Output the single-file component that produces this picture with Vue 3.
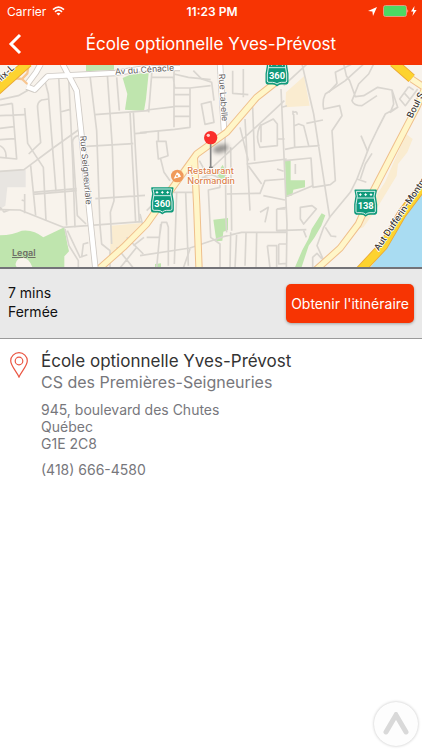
<template>
  <div class="page">
    <header class="top">
      <div class="status-bar">
        <div class="status-side">
          <span>Carrier</span>
          <svg class="wifi" viewBox="0 0 13 10" aria-hidden="true">
            <path d="M1 3.6 Q6.5 -1.2 12 3.6" />
            <path d="M3 5.8 Q6.5 2.6 10 5.8" />
            <path class="wifi-dot" d="M4.5 7.5 Q6.5 5.9 8.5 7.5 L6.5 9.6 Z" />
          </svg>
        </div>
        <span class="clock">11:23 PM</span>
        <div class="status-side right">
          <svg class="arrow" viewBox="0 0 9 9" aria-hidden="true">
            <path d="M9 0 L5 9 L4.4 4.6 L0 4 Z" />
          </svg>
          <svg class="battery" viewBox="0 0 34 12" aria-hidden="true">
            <rect x="0.5" y="0.5" width="23" height="11" rx="2" fill="#4cd964" stroke="#e59a80" />
            <path d="M24.5 4 Q26 6 24.5 8 Z" fill="#ffd9cf" />
            <path d="M31.5 1 L28 6.6 H30.4 L29.4 11 L33.6 5 H31 Z" fill="#fff" />
          </svg>
        </div>
      </div>
      <div class="nav-bar">
        <button class="back" type="button" aria-label="Retour">
          <svg viewBox="0 0 14 22" aria-hidden="true">
            <path d="M12 2 L3 11 L12 20" />
          </svg>
        </button>
        <h1>{{ school.name }}</h1>
      </div>
    </header>

    <div class="map">
      <svg class="map-tiles" viewBox="0 3 1266 606" preserveAspectRatio="xMidYMid slice">
        <defs>
          <filter id="soft" x="-50%" y="-50%" width="200%" height="200%">
            <feGaussianBlur stdDeviation="7" />
          </filter>
          <g id="shield">
            <path d="M-31 -37 H31 L28 -20 L32 5 V28 Q32 34 24 34 H14 Q6 34 0 39 Q-6 34 -14 34 H-24 Q-32 34 -32 28 V5 L-28 -20 Z" fill="#109a7b" stroke="#109a7b" stroke-width="5" stroke-linejoin="round" />
            <path d="M-28 -34 H28 L25 -19 L29 5 V26 Q29 30 24 30 H13 Q6 30 0 35 Q-6 30 -13 30 H-24 Q-29 30 -29 26 V5 L-25 -19 Z M-25 -14 H25" fill="none" stroke="#fff" stroke-width="2.5" />
            <path d="M-16 -29 l2 3 3 2 -3 2 -2 3 -2 -3 -3 -2 3 -2z M0 -29 l2 3 3 2 -3 2 -2 3 -2 -3 -3 -2 3 -2z M16 -29 l2 3 3 2 -3 2 -2 3 -2 -3 -3 -2 3 -2z" fill="#fff" />
          </g>
        </defs>
        <rect x="0" y="0" width="1266" height="612" fill="#f8f3ec" />

        <!-- parks, built-up blocks and water -->
        <path class="block" d="M0 320 L77 317 V370 H22 L16 425 L0 435 Z" />
        <g class="park">
          <path d="M258 0 H342 V17 L258 22 Z" />
          <path d="M368 42 L390 32 L425 28 L446 28 L438 105 L432 141 L375 137 L382 90 Z" />
          <path d="M0 514 Q40 512 65 500 Q100 495 130 520 L193 490 L202 540 L207 562 L193 577 V612 H98 Q85 572 55 585 Q40 598 52 612 H0 Z" />
          <path d="M465 612 V600 L483 598 V612 Z" />
          <path d="M640 467 L684 462 V498 L670 503 L667 530 L649 532 Z" />
          <path d="M650 330 L668 302 L676 320 L676 342 L660 345 Z" />
          <path d="M855 289 H872 V349 H915 V370 L880 377 L877 394 L858 400 Z" />
          <path d="M965 448 L976 454 L964 485 L944 520 L926 545 L904 612 H884 L907 558 L925 525 L935 495 Z" />
        </g>
        <g class="sand">
          <path d="M333 485 L432 476 L435 490 L350 565 L330 570 Z" />
          <path d="M858 85 L912 37 L929 125 L856 130 Z" />
          <path d="M1218 210 L1238 225 L1222 265 L1194 300 L1190 335 L1126 440 L1090 490 L1060 500 L1155 355 Z" />
        </g>
        <path d="M1266 385 L1225 440 L1165 540 L1110 612 H1266 Z" fill="#a9dcf2" />

        <!-- side streets -->
        <g class="street">
          <path d="M0 107 L55 95 L85 78 M37 118 L50 285 L0 280 M0 124 L37 118 M0 155 L75 152 M0 193 L42 188 M0 227 L45 224 M0 245 Q20 255 18 280" />
          <path d="M74 132 L83 238 L130 310 L138 470 M146 105 L125 108 Q110 115 113 135 L122 236 L86 270" />
          <path d="M135 52 L145 90 L168 382 M176 38 L190 290 L200 485 M206 42 L218 290 L225 490 M181 144 L208 137" />
          <path d="M0 322 L72 317 L155 255 L235 198 M92 305 L107 455 M98 385 L230 374 M98 391 L230 380 M74 390 V448 M65 408 L76 412" />
          <path d="M0 437 L60 438 L190 490 L425 473 M0 430 L12 444 L30 437" />
          <path d="M270 35 L290 200 L300 485 L305 540 L330 560 V612 M322 32 L337 250 L342 410 L331 445 L335 540" />
          <path d="M284 152 L445 140 M258 247 L400 239 M286 404 L435 394 M400 143 L418 475 M390 143 L407 475 M404 209 L440 206 M350 40 L358 140" />
          <path d="M235 215 Q215 220 218 240 L232 455 L258 480 M202 500 L240 580 L262 572 M245 580 L250 540 L265 536 M195 495 L207 545 L235 590 V612 M350 550 L400 612 M380 520 L430 570 M410 550 L360 612 M432 520 L400 545" />
        </g>
        <g class="street" transform="translate(420 0)">
          <path d="M36 20 L26 145 M102 20 V190 M102 30 L145 40 L212 47 M36 40 H100 L104 72 H150 L212 65 M150 72 V190 L104 196 M104 92 H148 M104 127 H148 M104 157 H148 M20 138 L104 128 M0 206 L104 196" />
          <path d="M184 120 L213 113 L222 175 L195 181 Z M160 20 L185 45 L215 55 L222 110 M278 20 V88 L325 92 M310 15 V100" />
          <path d="M50 232 H78 L84 275 L55 285 Z M55 200 V235 M62 285 L72 325 L90 350 M0 450 L10 490 M20 440 L50 410 M100 385 H160 M110 385 L103 600 M137 385 L145 605 M20 520 L58 520 L65 475 H80 L85 490 V605 M62 480 L50 612" />
          <path d="M215 312 L433 110 M255 205 L258 470 L260 505 M272 250 L275 500 M315 165 L330 440 M338 130 L344 290 M300 190 L325 290 M178 290 L200 330 M185 345 Q210 320 240 345 L240 370 L205 378 L212 520 L240 540 L240 612 M185 340 L240 350" />
          <path d="M360 185 L400 165 L412 180 V245 L360 250 Q345 220 360 185 M363 180 V235 M320 300 L440 285 M325 305 L365 360 M260 390 L360 388 L375 350 L435 345 M370 395 L435 408 M360 445 L385 430 L375 475 M410 435 L440 430 M410 435 V500 H440" />
          <path d="M0 575 L150 552 L250 518 L305 505 H440 M150 555 L130 612 M290 508 L285 612 M318 508 L315 605 M350 508 L348 612 M382 545 L390 612 M382 545 H410 V612 M272 505 L270 612" />
        </g>
        <g class="street" transform="translate(831 0)">
          <path d="M12 75 L30 480 M75 0 L110 150 L158 460 M20 65 L90 0 M15 130 L30 125 M48 140 V152 M50 145 Q62 140 60 152 M52 185 L65 180 L80 185 L95 245 M50 150 L53 250 L24 256 M53 250 L128 245 M88 178 L138 168 M0 225 L23 225" />
          <path d="M23 290 L102 282 L107 365 L60 385 L30 397 M102 282 L108 370 L160 362 L175 350 L165 200 L195 155 L188 125 L140 135 Q135 110 145 90 L205 50 L260 0 M55 300 V330 M0 315 L20 322" />
          <path d="M155 85 L180 58 L175 25 L225 0 M200 0 L208 35 L218 50 L235 98 L260 95 L302 70 L345 78 L362 130 L325 150 L302 195 L278 245 L240 345 L268 355 M290 0 L275 30 L245 60 L225 110 Q230 125 255 125 L300 95 M345 80 L350 120 L340 145 L362 130" />
          <path d="M252 215 L272 262 M285 268 L265 300 L250 345 M240 345 L220 385 L158 460 L140 490 L120 545 L145 600 M145 490 L162 516 L178 518 M70 430 L105 425 L118 435 L80 480 L70 465 Z M0 435 H25 M0 500 L88 497 M80 500 L88 520 M30 480 L28 612 M5 540 H28 M5 540 V600 L30 598 M107 612 V580 L120 568 L135 585" />
          <path d="M395 68 L368 105 L385 125 L422 75 M380 85 L398 105 M395 68 L410 78" />
        </g>

        <!-- main roads -->
        <g class="road-white">
          <path d="M122 0 L108 25 L82 60 M80 68 L104 77 L143 37 L345 27 L440 12 L540 12" />
          <path d="M188 0 L230 80 L243 200 L286 612" />
          <path d="M660 0 L672 200" />
        </g>
        <g class="road-white-fill">
          <path d="M122 0 L108 25 L82 60 M80 68 L104 77 L143 37 L345 27 L440 12 L540 12" />
          <path d="M188 0 L230 80 L243 200 L286 612" />
          <path d="M660 0 L672 200" />
        </g>
        <path class="ramp" d="M38 42 L66 45 L82 60 M66 45 L82 28 L86 0 M38 42 L30 48" />
        <g class="yellow-edge">
          <path d="M300 612 L370 550 L440 480 L500 395 L590 270 L680 205 L770 100 L840 45" />
          <path d="M583 280 L590 420 L597 612" />
          <path d="M945 620 L1020 553 L1075 480 L1120 380 L1190 245 L1250 130 L1280 60 M1235 45 L1280 75" />
        </g>
        <g class="yellow-fill">
          <path d="M300 612 L370 550 L440 480 L500 395 L590 270 L680 205 L770 100 L840 45" />
          <path d="M583 280 L590 420 L597 612" />
          <path d="M945 620 L1020 553 L1075 480 L1120 380 L1190 245 L1250 130 L1280 60 M1235 45 L1280 75" />
        </g>
        <g class="highway-edge">
          <path d="M-10 80 L85 -5 M1180 -5 L1235 43 M1080 620 L1150 545 L1205 450 L1280 350" />
        </g>
        <g class="highway">
          <path d="M-10 80 L85 -5 M1180 -5 L1235 43 M1080 620 L1150 545 L1205 450 L1280 350" />
        </g>

        <!-- labels -->
        <g class="label">
          <text class="dark" transform="translate(4 52) rotate(-43)">lix-L</text>
          <text transform="translate(346 32) rotate(-4)">Av du Cénacle</text>
          <text transform="translate(240 216) rotate(85)">Rue Seigneuriale</text>
          <text transform="translate(656 30) rotate(86)">Rue Labelle</text>
          <text class="dark" transform="translate(1236 164) rotate(-63)">Boul S</text>
          <text class="dark" transform="translate(1136 562) rotate(-56)">Aut Dufferin-Montm</text>
          <g class="poi">
            <text x="562" y="330">Restaurant</text>
            <text x="562" y="360">Normandin</text>
          </g>
        </g>
        <circle cx="532" cy="336" r="19" fill="#f09a5b" />
        <path d="M521 344 L531 325 Q541 329 543 338 Z" fill="#fff" />
        <circle cx="531" cy="336" r="3" fill="#f09a5b" />

        <g class="route">
          <use href="#shield" x="487" y="409" />
          <text x="487" y="428">360</text>
          <use href="#shield" x="831" y="25" />
          <text x="831" y="44">360</text>
          <use href="#shield" x="1097" y="416" />
          <text x="1097" y="435">138</text>
        </g>

        <ellipse cx="662" cy="254" rx="24" ry="12" fill="#444" opacity="0.55" filter="url(#soft)" transform="rotate(-15 662 254)" />
        <path d="M627 310 H638" stroke="#777" stroke-width="4" />
        <path d="M632 240 V311" stroke="#858585" stroke-width="5" />
        <circle cx="632" cy="221" r="20" fill="#fa2f2b" />
        <circle cx="625" cy="214" r="5" fill="#ffd5d0" />
      </svg>
      <a class="legal" href="#legal">Legal</a>
    </div>

    <section class="summary">
      <div class="summary-text">
        <p>{{ school.distance }}</p>
        <p>{{ school.state }}</p>
      </div>
      <button class="route-btn" type="button">Obtenir l'itinéraire</button>
    </section>

    <section class="details">
      <svg class="pin" viewBox="0 0 18 26" aria-hidden="true">
        <path d="M9 25 C7 20 0.7 14 0.7 8.8 A8.3 8.1 0 0 1 17.3 8.8 C17.3 14 11 20 9 25 Z" />
        <circle cx="9" cy="9" r="3.8" />
      </svg>
      <div>
        <h2>{{ school.name }}</h2>
        <p class="board">{{ school.board }}</p>
        <address>
          <span v-for="line in school.address" :key="line">{{ line }}</span>
        </address>
        <p class="phone">{{ school.phone }}</p>
      </div>
    </section>

    <button class="to-top" type="button" aria-label="Haut de page">
      <svg viewBox="0 0 26 24" aria-hidden="true">
        <path d="M3 20 L13 3 L23 20" />
      </svg>
    </button>
  </div>
</template>

<script setup>
const school = {
  name: 'École optionnelle Yves-Prévost',
  board: 'CS des Premières-Seigneuries',
  distance: '7 mins',
  state: 'Fermée',
  address: ['945, boulevard des Chutes', 'Québec', 'G1E 2C8'],
  phone: '(418) 666-4580'
};
</script>

<style>
body {
  margin: 0;
  background: #ffffff;
}
</style>

<style scoped>
.page {
  font-family: Inter, "Liberation Sans", sans-serif;
  color: #111111;
}

h1,
h2,
p {
  margin: 0;
  font-weight: 400;
}

button {
  border: none;
  font-family: inherit;
  cursor: pointer;
}

.top {
  background: #f73403;
  color: #ffffff;
}

.status-bar {
  display: grid;
  grid-template-columns: 1fr auto 1fr;
  align-items: center;
  height: 22px;
  padding: 0 5px 0 7px;
  font-size: 12px;
}

.status-side {
  display: flex;
  align-items: center;
  gap: 6px;
}

.status-side.right {
  justify-content: flex-end;
}

.clock {
  font-weight: 600;
}

.wifi {
  width: 13px;
  height: 10px;
  fill: none;
  stroke: #ffffff;
  stroke-width: 1.7;
}

.wifi .wifi-dot {
  fill: #ffffff;
  stroke: none;
}

.arrow {
  width: 9px;
  height: 9px;
  fill: #ffffff;
}

.battery {
  width: 34px;
  height: 12px;
}

.nav-bar {
  display: grid;
  grid-template-columns: 40px 1fr 40px;
  align-items: center;
  height: 43px;
}

.nav-bar h1 {
  font-size: 17px;
  line-height: 22px;
  text-align: center;
  white-space: nowrap;
}

.back {
  display: flex;
  align-items: center;
  height: 40px;
  padding: 0 8px;
  background: transparent;
}

.back svg {
  width: 14px;
  height: 22px;
  fill: none;
  stroke: #ffffff;
  stroke-width: 3;
}

.map {
  position: relative;
  border-bottom: 2px solid #737378;
}

.map-tiles {
  display: block;
  width: 100%;
  height: 202px;
}

.block {
  fill: #e8e5e1;
}

.park {
  fill: #bfe5ae;
}

.sand {
  fill: #faecd0;
}

.street {
  fill: none;
  stroke: #dad6d0;
  stroke-width: 5;
  stroke-linejoin: round;
}

.road-white,
.road-white-fill,
.ramp,
.yellow-edge,
.yellow-fill,
.highway,
.highway-edge {
  fill: none;
  stroke-linejoin: round;
}

.road-white {
  stroke: #cfcac4;
  stroke-width: 19;
}

.road-white-fill {
  stroke: #ffffff;
  stroke-width: 14;
}

.ramp {
  stroke: #f8c690;
  stroke-width: 7;
}

.yellow-edge {
  stroke: #efbf8c;
  stroke-width: 22;
}

.yellow-fill {
  stroke: #fff6c8;
  stroke-width: 16;
}

.highway-edge {
  stroke: #eba836;
  stroke-width: 29;
}

.highway {
  stroke: #fdd32f;
  stroke-width: 24;
}

.label {
  fill: #66625f;
  font-size: 26px;
  paint-order: stroke;
  stroke: #ffffff;
  stroke-width: 5;
  stroke-linejoin: round;
}

.label .dark {
  fill: #37332f;
  font-size: 27px;
  font-weight: 500;
}

.label .poi {
  fill: #dc8048;
  font-size: 27px;
  font-weight: 500;
}

.route {
  fill: #ffffff;
  font-family: Roboto, "Liberation Sans", sans-serif;
  font-size: 28px;
  font-weight: 700;
  text-anchor: middle;
}

.legal {
  position: absolute;
  left: 12px;
  bottom: 8px;
  color: #6e6e66;
  font-size: 9px;
  font-weight: 600;
  line-height: 12px;
}

.summary {
  display: flex;
  align-items: center;
  justify-content: space-between;
  height: 69px;
  padding: 0 8px;
  background: #e9e9e9;
  border-bottom: 1px solid #9a9a9a;
}

.summary-text {
  padding-bottom: 3px;
  font-size: 14px;
  line-height: 19px;
}

.route-btn {
  height: 39px;
  padding: 0 5px;
  border-radius: 5px;
  background: #f73403;
  color: #ffffff;
  font-size: 14px;
  white-space: nowrap;
  box-shadow: 0 1px 3px rgba(0, 0, 0, 0.3);
}

.details {
  display: flex;
  gap: 13px;
  padding: 11px 10px;
  color: #77777c;
  font-size: 14px;
  line-height: 17px;
}

.pin {
  flex: none;
  width: 18px;
  height: 26px;
  margin-top: 2px;
  fill: none;
  stroke: #ea5542;
  stroke-width: 1.2;
}

.details h2 {
  color: #333333;
  font-size: 17px;
  line-height: 22px;
}

.board {
  font-size: 16px;
  line-height: 20px;
}

address {
  display: grid;
  margin: 9px 0;
  font-style: normal;
}

.to-top {
  position: fixed;
  right: 4px;
  bottom: 4px;
  display: flex;
  align-items: center;
  justify-content: center;
  width: 44px;
  height: 44px;
  padding: 0;
  border-radius: 50%;
  background: #fdfdfd;
  box-shadow: 0 0 3px rgba(0, 0, 0, 0.25);
}

.to-top svg {
  width: 26px;
  height: 24px;
  fill: none;
  stroke: #d9d9d9;
  stroke-width: 5;
  stroke-linecap: round;
}
</style>
